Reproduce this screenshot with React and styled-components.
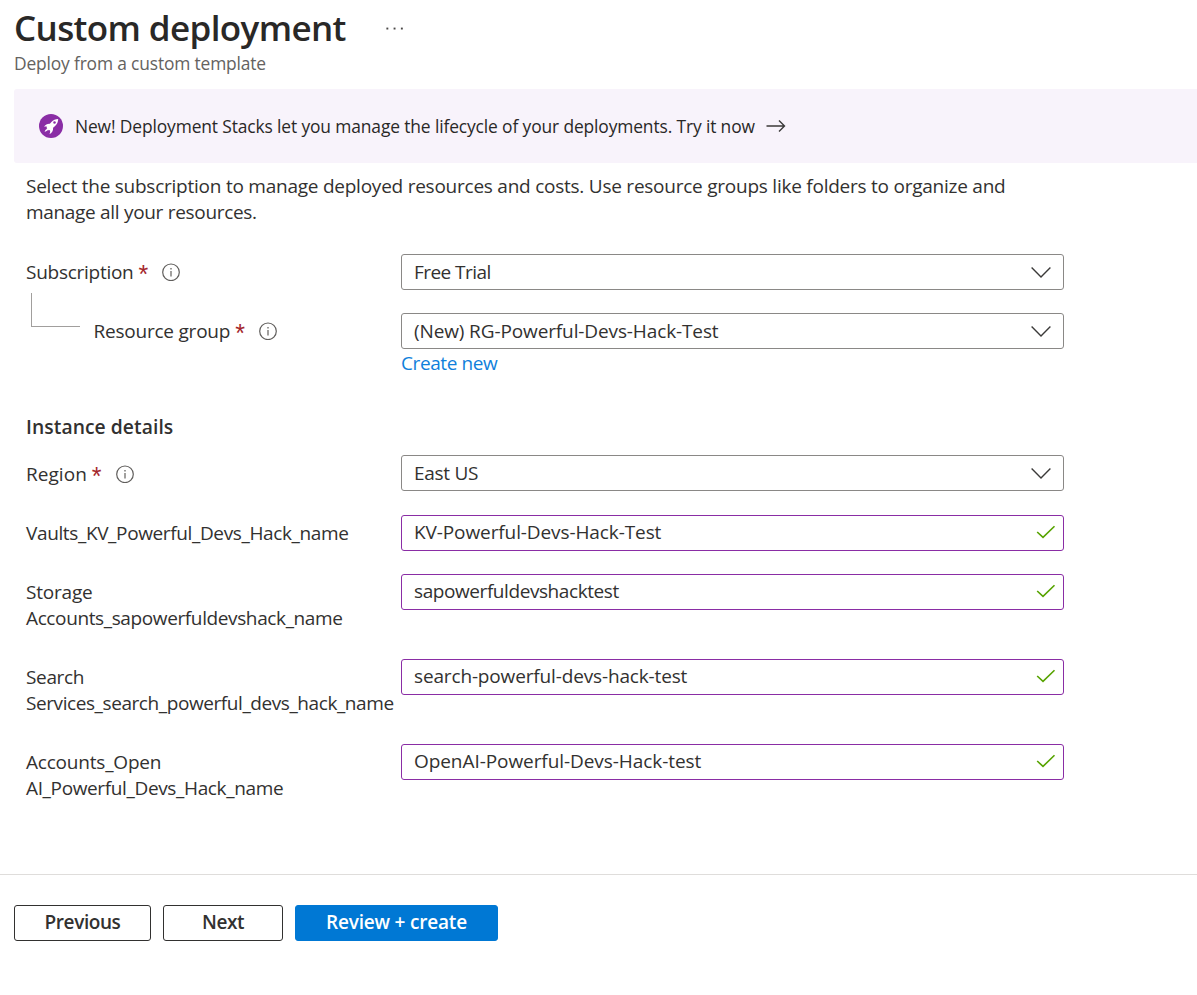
import React from "react";
import styled, { createGlobalStyle } from "styled-components";

const GlobalStyle = createGlobalStyle`
  *, *::before, *::after { box-sizing: border-box; }
  body {
    margin: 0;
    background: #fff;
    color: #323130;
    font-family: "Open Sans", "Noto Sans", sans-serif;
    font-size: 19px;
    line-height: 26px;
  }
`;

const Page = styled.div`
  min-height: 995px;
  display: flex;
  flex-direction: column;
  overflow: hidden;
`;

const Text = styled.span`
  white-space: nowrap;
  letter-spacing: ${(p) => p.$track || 0}px;
`;

const Header = styled.header`
  padding: 7px 0 0 14px;
`;

const TitleRow = styled.div`
  display: flex;
  align-items: center;
  height: 42px;
  gap: 40px;
`;

const Title = styled.h1`
  margin: 0;
  font-size: 35px;
  line-height: 42px;
  font-weight: 600;
  letter-spacing: -0.62px;
  color: #292827;
`;

const Subtitle = styled.div`
  padding: 1px 0 0;
  font-size: 17.4px;
  line-height: 26px;
  letter-spacing: -0.16px;
  color: #646260;
`;

const Banner = styled.div`
  display: flex;
  align-items: center;
  height: 74px;
  margin: 13px 0 0 14px;
  padding: 0 25px;
  border-radius: 3px 0 0 3px;
  background: #f8f3fb;
  color: #292827;
  font-size: 17.4px;
`;

const BannerText = styled.span`
  margin: 0 11px 0 12px;
  letter-spacing: -0.125px;
  white-space: nowrap;
`;

const Intro = styled.p`
  margin: 10px 0 29px 26px;
`;

const Form = styled.div`
  display: flex;
  flex-direction: column;
  gap: 23px;
  width: 1038px;
  margin-left: 26px;
`;

const Row = styled.div`
  display: grid;
  grid-template-columns: 375px 663px;
  align-items: start;
`;

const Label = styled.label`
  display: flex;
  flex-direction: column;
  padding: ${(p) => (p.$low ? "6px 0 4px" : "5px 0")};
`;

const LabelLine = styled.span`
  display: flex;
  align-items: center;
  height: 26px;
`;

const Nested = styled.div`
  display: flex;
  align-items: flex-start;
`;

const Branch = styled.span`
  width: 49px;
  height: 34px;
  margin: -20px 13.5px 0 5px;
  border: solid #a19f9d;
  border-width: 0 0 1px 1px;
`;

const Star = styled.span`
  width: 10px;
  height: 26px;
  margin: 4px 14px 0 5px;
  font-family: "Liberation Sans", sans-serif;
  font-size: 25px;
  line-height: 26px;
  color: #a4262c;
`;

const Control = styled.div`
  display: flex;
  align-items: center;
  justify-content: space-between;
  height: 36px;
  padding: 0 ${(p) => (p.$valid ? 7 : 12)}px ${(p) => (p.$valid ? 2 : 0)}px 12px;
  border: 1px solid ${(p) => (p.$valid ? "#8a2da5" : "#8a8886")};
  border-radius: 3px;
  background: #fff;
`;

const Link = styled.a`
  display: block;
  margin-top: 1px;
  height: 26px;
  color: #0f7fdb;
`;

const SectionTitle = styled.h2`
  margin: 38px 0 15px 26px;
  font-size: 19.3px;
  line-height: 26px;
  font-weight: 600;
  letter-spacing: 0.06px;
`;

const TextFields = styled.div`
  display: flex;
  flex-direction: column;
  gap: 23px;
  margin-top: 1px;
`;

const Footer = styled.footer`
  display: flex;
  gap: 12px;
  margin-top: 68px;
  padding: 30px 14px;
  border-top: 1px solid #dfdddb;
`;

const Button = styled.button`
  width: ${(p) => p.$width}px;
  height: 36px;
  padding: 0 0 2px;
  border: 1px solid ${(p) => (p.$primary ? "#0078d4" : "#323130")};
  border-radius: 3px;
  background: ${(p) => (p.$primary ? "#0078d4" : "#fff")};
  color: ${(p) => (p.$primary ? "#fff" : "#323130")};
  font: 600 19px/26px "Open Sans", "Noto Sans", sans-serif;
`;

const Icon = styled.svg`
  display: block;
  flex: none;
  fill: none;
`;

const MoreIcon = () => (
  <Icon width="18" height="4" viewBox="0 0 18 4">
    <g fill="#4a4847">
      <rect x="0.4" y="1.6" width="1.9" height="1.9" />
      <rect x="7.6" y="1.6" width="1.9" height="1.9" />
      <rect x="14.9" y="1.6" width="1.9" height="1.9" />
    </g>
  </Icon>
);

const RocketIcon = () => (
  <Icon width="24" height="24" viewBox="0 0 24 24">
    <circle cx="12" cy="12" r="12" fill="#8a2da5" />
    <path
      fill="#fff"
      d="M19.2 4.900c-2.700.1-5 1-6.800 3l-1.500 1.900c-2.300-.2-4.200.6-6.100 3.200 1.200-.5 2.300-.5 3.300-.1l-.7 1.100.9.8c-1.300.5-2.200 1.400-2.700 2.900 1.500-.4 2.700-1 3.500-2l.8.7 1-.5c.5 1.200.3 2.700-.4 4.300 2.700-1.600 3.800-3.700 3.600-6.500l2-1.700c2-1.900 3-4.200 3.100-7.100Z"
    />
    <circle cx="15.500" cy="8.600" r="1.250" fill="#8a2da5" />
  </Icon>
);

const ArrowIcon = () => (
  <Icon width="20" height="14" viewBox="0 0 20 14" stroke="#3b3a39" strokeWidth="1.4">
    <path d="M.5 7h17.700M13 1.500 18.500 7 13 12.500" />
  </Icon>
);

const InfoIcon = () => (
  <Icon width="18" height="18" viewBox="0 0 18 18">
    <circle cx="9" cy="9.300" r="8.300" stroke="#605e5c" strokeWidth="1.2" />
    <path d="M9 8v5.500" stroke="#797775" strokeWidth="1.4" />
    <path d="M9 5v1.500" stroke="#797775" strokeWidth="1.5" />
  </Icon>
);

const ChevronIcon = () => (
  <Icon width="20" height="12" viewBox="0 0 20 12" stroke="#3b3a39" strokeWidth="1.4">
    <path d="m.6 1.600 9.400 9.300 9.400-9.300" />
  </Icon>
);

const CheckIcon = () => (
  <Icon width="20" height="14" viewBox="0 0 20 14" stroke="#57a300" strokeWidth="1.6">
    <path d="m1.200 7 5.800 5.400L18.500 1.200" />
  </Icon>
);

const RequiredLabel = ({ text, track }) => (
  <LabelLine>
    <Text $track={track}>{text}</Text>
    <Star>*</Star>
    <InfoIcon />
  </LabelLine>
);

const Select = ({ value, track }) => (
  <Control>
    <Text $track={track}>{value}</Text>
    <ChevronIcon />
  </Control>
);

const textFields = [
  { label: [["Vaults_KV_Powerful_Devs_Hack_name", -0.37]], value: "KV-Powerful-Devs-Hack-Test", track: -0.1 },
  {
    label: [["Storage", -0.2], ["Accounts_sapowerfuldevshack_name", -0.38]],
    value: "sapowerfuldevshacktest",
    track: -0.42,
  },
  {
    label: [["Search", -0.35], ["Services_search_powerful_devs_hack_name", -0.42]],
    value: "search-powerful-devs-hack-test",
    track: -0.15,
  },
  {
    label: [["Accounts_Open", -0.2], ["AI_Powerful_Devs_Hack_name", -0.36]],
    value: "OpenAI-Powerful-Devs-Hack-test",
    track: -0.07,
  },
];

export default function App() {
  return (
    <Page>
      <GlobalStyle />
      <Header>
        <TitleRow>
          <Title>Custom deployment</Title>
          <MoreIcon />
        </TitleRow>
        <Subtitle>Deploy from a custom template</Subtitle>
      </Header>
      <Banner>
        <RocketIcon />
        <BannerText>
          New! Deployment Stacks let you manage the lifecycle of your deployments. Try it now
        </BannerText>
        <ArrowIcon />
      </Banner>
      <Intro>
        <Text $track={-0.24}>
          Select the subscription to manage deployed resources and costs. Use resource groups like folders to organize and
        </Text>
        <br />
        <Text $track={-0.31}>manage all your resources.</Text>
      </Intro>
      <Form>
        <Row>
          <Label>
            <RequiredLabel text="Subscription" track={-0.27} />
          </Label>
          <Select value="Free Trial" track={-0.56} />
        </Row>
        <Row>
          <Nested>
            <Branch />
            <Label>
              <RequiredLabel text="Resource group" track={-0.22} />
            </Label>
          </Nested>
          <div>
            <Select value="(New) RG-Powerful-Devs-Hack-Test" track={-0.12} />
            <Link>
              <Text $track={-0.41}>Create new</Text>
            </Link>
          </div>
        </Row>
      </Form>
      <SectionTitle>Instance details</SectionTitle>
      <Form>
        <Row>
          <Label $low>
            <RequiredLabel text="Region" track={0.04} />
          </Label>
          <Select value="East US" track={-0.3} />
        </Row>
        <TextFields>
          {textFields.map((field) => (
            <Row key={field.value}>
              <Label>
                {field.label.map(([text, track]) => (
                  <LabelLine key={text}>
                    <Text $track={track}>{text}</Text>
                  </LabelLine>
                ))}
              </Label>
              <Control $valid>
                <Text $track={field.track}>{field.value}</Text>
                <CheckIcon />
              </Control>
            </Row>
          ))}
        </TextFields>
      </Form>
      <Footer>
        <Button $width={137}>
          <Text $track={-0.42}>Previous</Text>
        </Button>
        <Button $width={120}>
          <Text $track={-0.45}>Next</Text>
        </Button>
        <Button $width={203} $primary>
          <Text $track={-0.2}>Review + create</Text>
        </Button>
      </Footer>
    </Page>
  );
}
